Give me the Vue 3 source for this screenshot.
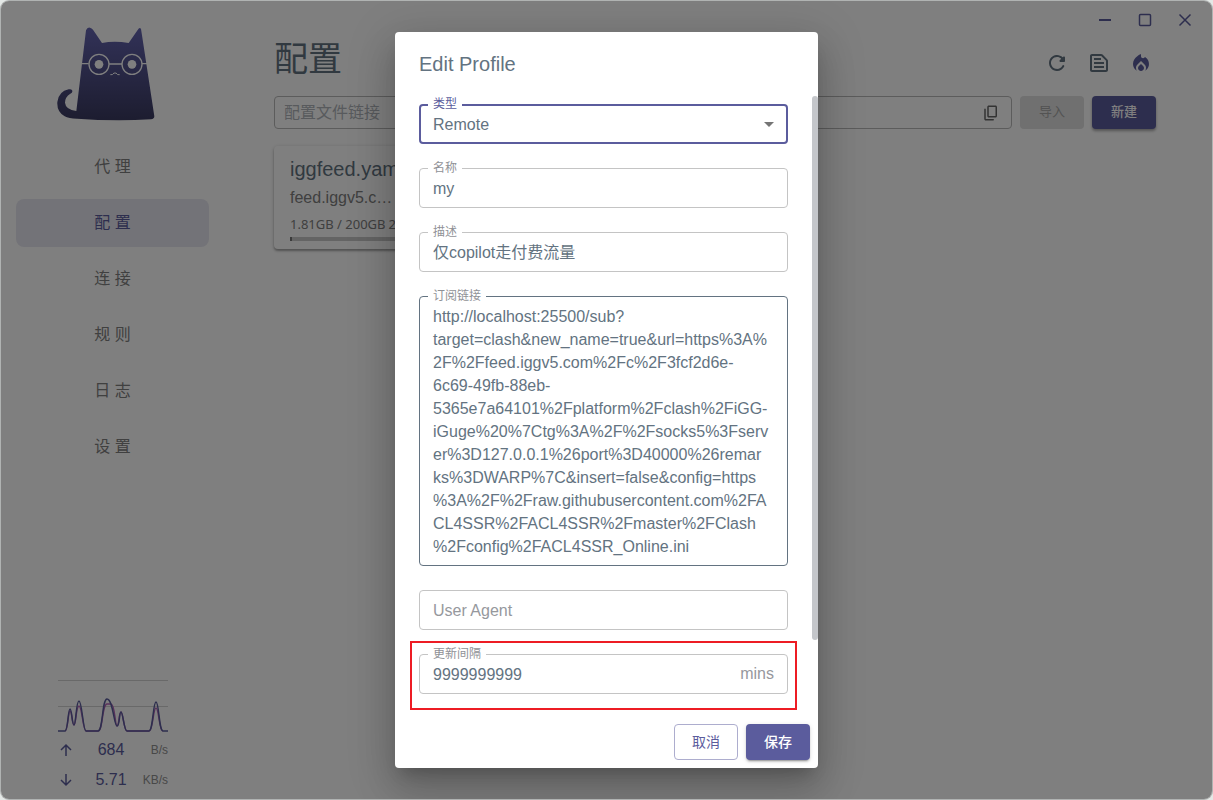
<script setup>
import { ref } from 'vue'

const navItems = ['代 理', '配 置', '连 接', '规 则', '日 志', '设 置']
const active = '配 置'

const type = ref('Remote')
const name = ref('my')
const desc = ref('仅copilot走付费流量')
const url = ref(
  'http://localhost:25500/sub?target=clash&new_name=true&url=https%3A%2F%2Ffeed.iggv5.com%2Fc%2F3fcf2d6e-6c69-49fb-88eb-5365e7a64101%2Fplatform%2Fclash%2FiGG-iGuge%20%7Ctg%3A%2F%2Fsocks5%3Fserver%3D127.0.0.1%26port%3D40000%26remarks%3DWARP%7C&insert=false&config=https%3A%2F%2Fraw.githubusercontent.com%2FACL4SSR%2FACL4SSR%2Fmaster%2FClash%2Fconfig%2FACL4SSR_Online.ini'
)
const agent = ref('')
const interval = ref('9999999999')
</script>

<template>
  <div class="frame">
    <div class="window">
      <aside class="sidebar">
        <svg class="logo" viewBox="50 50 294 282" aria-hidden="true">
          <defs>
            <linearGradient id="fur" x1="0" y1="0" x2="0" y2="1">
              <stop offset="0" stop-color="#6464b0" />
              <stop offset="1" stop-color="#3a3a60" />
            </linearGradient>
          </defs>
          <path
            fill="url(#fur)"
            d="M108 302 L137 60 Q141 50 149 52 Q154 53 158 58 L185 98 Q222 90 265 98 L292 59 Q298 49 302 56 L305 75 L342 318 Q342 326 332 327 Q220 333 110 325 Q85 325 73 318 Q49 304 51 275 Q55 243 85 237 Q95 235 96 241 Q97 247 90 250 Q74 260 74 277 Q76 298 108 302 Z"
          />
          <g fill="none" stroke="#fff" stroke-width="4">
            <circle cx="176" cy="162" r="30" />
            <circle cx="275" cy="162" r="30" />
            <path d="M123 160h22M206 161h39M305 160h17" />
            <path d="M210 193q8 1 9-3M238 193q-8 1-9-3M218 190q6-5 12 0" stroke-width="3" />
          </g>
          <circle cx="176" cy="162" r="13" fill="#fff" />
          <circle cx="275" cy="162" r="13" fill="#fff" />
        </svg>

        <nav class="nav">
          <a v-for="item in navItems" :key="item" href="#" :class="{ active: item === active }">{{ item }}</a>
        </nav>

        <div class="traffic">
          <svg class="graph" viewBox="0 0 110 60" aria-hidden="true">
            <path d="M0 8.5h110M0 34.5h110" stroke="#d2d2d2" fill="none" />
            <path
              d="M7 59C10 59 10 39 12 39S14 53 16 53S18 34 21 34S25 59 28 59H40C45 59 44 32 49 32H53C57 32 57 54 59 54S61 40 63 40S66 59 69 59H91C95 59 95 36 98 36S101 59 105 59"
              fill="none" stroke="#b866b8" stroke-width="1.5"
            />
            <path
              d="M0 59H7C10 59 10 37 12 37S14 53 16 53S18 29 21 29S25 59 28 59H40C45 59 44 27 49 27C55 27 56 54 59 54S61 40 63 40S66 59 69 59H91C95 59 95 30 98 30S101 59 105 59H110"
              fill="none" stroke="#5b5c9d" stroke-width="1.5"
            />
          </svg>
          <div class="rate">
            <svg viewBox="0 0 16 16" aria-hidden="true"><path d="M8 14V3M3 8l5-5 5 5" /></svg>
            <b>684</b><span>B/s</span>
          </div>
          <div class="rate">
            <svg viewBox="0 0 16 16" aria-hidden="true"><path d="M8 2v11M3 8l5 5 5-5" /></svg>
            <b>5.71</b><span>KB/s</span>
          </div>
        </div>
      </aside>

      <main class="main">
        <div class="controls">
          <button aria-label="最小化"><svg viewBox="0 0 14 14"><path d="M1 7h12" stroke-width="2" /></svg></button>
          <button aria-label="最大化"><svg viewBox="0 0 14 14"><rect x="1.5" y="1.5" width="11" height="11" rx="1" /></svg></button>
          <button aria-label="关闭"><svg viewBox="0 0 14 14"><path d="M1.5 1.5l11 11M12.5 1.5l-11 11" /></svg></button>
        </div>

        <header class="header">
          <h1>配置</h1>
          <div class="tools">
            <button aria-label="刷新">
              <svg viewBox="0 0 24 24"><path d="M17.65 6.35c-1.63-1.63-3.94-2.57-6.48-2.31-3.67.37-6.69 3.35-7.1 7.02C3.52 15.91 7.27 20 12 20c3.19 0 5.93-1.87 7.21-4.56.32-.67-.16-1.44-.9-1.44-.37 0-.72.2-.88.53-1.13 2.43-3.84 3.97-6.8 3.31-2.22-.49-4.01-2.3-4.48-4.52C5.31 9.44 8.26 6 12 6c1.66 0 3.14.69 4.22 1.78l-1.51 1.51c-.63.63-.19 1.71.7 1.71H19c.55 0 1-.45 1-1V6.41c0-.89-1.08-1.34-1.71-.71l-.64.65z" /></svg>
            </button>
            <button aria-label="文档">
              <svg viewBox="0 0 24 24"><path d="M14.17 5L19 9.83V19H5V5h9.17m0-2H5c-1.1 0-2 .9-2 2v14c0 1.1.9 2 2 2h14c1.1 0 2-.9 2-2V9.83c0-.53-.21-1.04-.59-1.41l-4.83-4.83c-.37-.38-.88-.59-1.41-.59zM7 15h10v2H7v-2zm0-4h10v2H7v-2zm0-4h7v2H7V7z" /></svg>
            </button>
            <button aria-label="激活" class="fire">
              <svg viewBox="0 0 24 24"><path d="M16 6l-.44.55C14.38 8.02 12 7.19 12 5.3V3S4 6 4 13c0 2.92 1.56 5.47 3.89 6.86-.56-.79-.89-1.76-.89-2.8 0-1.32.52-2.56 1.47-3.5L12 10.1l3.53 3.47c.95.93 1.47 2.17 1.47 3.5 0 1.02-.31 1.96-.85 2.75 1.89-1.15 3.29-3.06 3.71-5.3.66-3.55-1.07-6.9-3.86-8.52z" /><path d="M12 12.9l-2.13 2.09c-.56.56-.87 1.29-.87 2.07C9 18.68 10.35 20 12 20s3-1.32 3-2.94c0-.78-.31-1.52-.87-2.07L12 12.9z" /></svg>
            </button>
          </div>
        </header>

        <div class="import">
          <div class="link">
            <input type="text" placeholder="配置文件链接" aria-label="配置文件链接" />
            <button aria-label="粘贴">
              <svg viewBox="0 0 24 24"><path d="M15 20H5V7c0-.55-.45-1-1-1s-1 .45-1 1v13c0 1.1.9 2 2 2h10c.55 0 1-.45 1-1s-.45-1-1-1zm5-4V4c0-1.1-.9-2-2-2H9c-1.1 0-2 .9-2 2v12c0 1.1.9 2 2 2h9c1.1 0 2-.9 2-2zm-2 0H9V4h9v12z" /></svg>
            </button>
          </div>
          <button class="small" disabled>导入</button>
          <button class="small primary">新建</button>
        </div>

        <section class="cards">
          <article class="card">
            <h2>iggfeed.yaml</h2>
            <p class="source">feed.iggv5.c…</p>
            <p class="usage"><span>1.81GB / 200GB</span><span>2</span></p>
            <div class="bar"><i></i></div>
          </article>
        </section>
      </main>

      <div class="backdrop">
        <form class="dialog" role="dialog" aria-labelledby="dlg-title" @submit.prevent>
          <h2 id="dlg-title">Edit Profile</h2>
          <div class="body">
            <div class="field focused">
              <label for="f-type">类型</label>
              <select id="f-type" v-model="type"><option>Remote</option><option>Local</option></select>
              <svg class="caret" viewBox="0 0 10 5" aria-hidden="true"><path d="M0 0h10L5 5z" /></svg>
            </div>
            <div class="field">
              <label for="f-name">名称</label>
              <input id="f-name" v-model="name" type="text" />
            </div>
            <div class="field">
              <label for="f-desc">描述</label>
              <input id="f-desc" v-model="desc" type="text" />
            </div>
            <div class="field dark">
              <label for="f-url">订阅链接</label>
              <textarea id="f-url" v-model="url" rows="11" spellcheck="false"></textarea>
            </div>
            <div class="field">
              <input id="f-agent" v-model="agent" type="text" placeholder="User Agent" aria-label="User Agent" />
            </div>
            <div class="field">
              <label for="f-int">更新间隔</label>
              <input id="f-int" v-model="interval" type="text" inputmode="numeric" />
              <span class="suffix">mins</span>
              <div class="highlight"></div>
            </div>
            <div class="thumb"></div>
          </div>
          <footer class="actions">
            <button type="button" class="cancel">取消</button>
            <button type="submit" class="save">保存</button>
          </footer>
        </form>
      </div>
    </div>
  </div>
</template>

<style>
body {
  background: #e4e8e6;
}
</style>

<style scoped>
* {
  box-sizing: border-box;
}
.frame {
  height: 100vh;
  min-height: 600px;
  padding: 1px;
  border-radius: 9px;
  background: #b0b3b2;
  font-family: "Liberation Sans", "Noto Sans CJK SC", sans-serif;
  font-size: 16px;
  color: #637381;
}
.window {
  position: relative;
  display: flex;
  height: 100%;
  overflow: hidden;
  border-radius: 8px;
  background: #fff;
}
h1, h2, p {
  margin: 0;
  font-weight: 400;
}
button {
  display: flex;
  align-items: center;
  justify-content: center;
  padding: 0;
  border: 0;
  background: none;
  color: inherit;
  font: inherit;
}
input, select, textarea {
  min-width: 0;
  border: 0;
  outline: 0;
  background: none;
  color: inherit;
  font: inherit;
}

.sidebar {
  display: flex;
  flex: 0 0 224px;
  flex-direction: column;
  padding: 26px 16px 4px 15px;
}
.logo {
  width: 98px;
  height: 94px;
  margin-left: 41px;
}
.nav {
  display: flex;
  flex-direction: column;
  gap: 8px;
  margin-top: 22px;
}
.nav a {
  height: 48px;
  border-radius: 8px;
  color: #808080;
  line-height: 48px;
  text-align: center;
  text-decoration: none;
}
.nav a.active {
  background: rgba(91, 92, 157, 0.15);
  color: #5b5c9d;
}
.traffic {
  width: 110px;
  margin: auto 0 0 42px;
}
.graph {
  display: block;
  width: 110px;
  height: 60px;
  margin-bottom: 3px;
}
.rate {
  display: grid;
  grid-template-columns: 16px 1fr 28px;
  align-items: center;
  height: 30px;
  color: #5b5c9d;
}
.rate svg {
  width: 16px;
  height: 16px;
  fill: none;
  stroke: #5b5c9d;
  stroke-width: 1.5;
}
.rate b {
  padding-left: 8px;
  font-weight: 400;
  text-align: center;
}
.rate span {
  justify-self: end;
  color: #909090;
  font-size: 12px;
}

.main {
  flex: 1;
  min-width: 0;
  padding: 0 56px 0 49px;
}
.controls {
  display: flex;
  justify-content: flex-end;
  height: 38px;
  margin-right: -49px;
}
.controls button {
  width: 40px;
}
.controls svg {
  width: 14px;
  height: 14px;
  fill: none;
  stroke: #5b5c9d;
  stroke-width: 1.5;
}
.header {
  display: flex;
  align-items: center;
  justify-content: space-between;
  height: 48px;
}
h1 {
  margin-top: -8px;
  font-size: 34px;
  line-height: 48px;
}
.tools {
  display: flex;
  gap: 18px;
  margin-right: 3px;
}
.tools button {
  display: block;
}
.tools svg {
  display: block;
  width: 24px;
  height: 24px;
  fill: #637381;
}
.tools .fire svg {
  fill: #5b5c9d;
}
.import {
  display: flex;
  gap: 8px;
  margin-top: 9px;
}
.link {
  display: flex;
  flex: 1;
  align-items: center;
  height: 33px;
  padding: 0 11px 0 9px;
  border: 1px solid #b8b8b8;
  border-radius: 4px;
}
.link input {
  flex: 1;
  padding: 0;
}
.link input::placeholder {
  color: #b0b5ba;
  opacity: 1;
}
.link svg {
  width: 18px;
  height: 18px;
  fill: #666;
}
.small {
  width: 64px;
  height: 33px;
  padding-bottom: 4px;
  border-radius: 4px;
  background: #e0e0e0;
  color: #a6a6a6;
  font-size: 13px;
}
.small.primary {
  background: #5b5c9d;
  color: #fff;
  font-weight: 500;
  box-shadow: 0 2px 3px rgba(0, 0, 0, 0.35);
}
.cards {
  display: grid;
  grid-template-columns: repeat(3, 1fr);
  gap: 16px;
  margin-top: 17px;
}
.card {
  padding: 8px 16px;
  border-radius: 4px;
  box-shadow: 0 2px 2px rgba(0, 0, 0, 0.25), 0 1px 4px rgba(0, 0, 0, 0.2);
}
.card h2 {
  font-size: 20px;
  line-height: 30px;
}
.source {
  color: #808080;
  line-height: 28px;
}
.usage {
  display: flex;
  gap: 3px;
  color: #808080;
  font-family: "Noto Sans", sans-serif;
  font-size: 13px;
  line-height: 25px;
}
.bar {
  height: 4px;
  background: #c8c8c8;
}
.bar i {
  display: block;
  width: 2px;
  height: 4px;
  background: #777;
}

.backdrop {
  position: absolute;
  inset: 0;
  display: flex;
  align-items: center;
  justify-content: center;
  background: rgba(0, 0, 0, 0.5);
}
.dialog {
  display: flex;
  flex-direction: column;
  width: 423px;
  max-width: calc(100% - 64px);
  max-height: calc(100% - 62px);
  border-radius: 4px;
  background: #fff;
  box-shadow: 0 11px 15px -7px rgba(0, 0, 0, 0.2), 0 24px 38px 3px rgba(0, 0, 0, 0.14), 0 9px 46px 8px rgba(0, 0, 0, 0.12);
}
.dialog h2 {
  padding: 16px 24px;
  font-size: 20px;
  line-height: 32px;
}
.body {
  position: relative;
  display: flex;
  flex-direction: column;
  gap: 24px;
  padding: 8px 30px 22px 24px;
}
.thumb {
  position: absolute;
  top: 0;
  right: 0;
  width: 6px;
  height: 544px;
  border-radius: 3px;
  background: #c4c6ca;
}
.field {
  position: relative;
  display: flex;
  align-items: center;
  min-height: 40px;
  border: 1px solid #c4c4c4;
  border-radius: 4px;
}
.field.dark {
  border-color: #637381;
}
.field.focused {
  border: 2px solid #5b5c9d;
}
.field label {
  position: absolute;
  top: -11px;
  left: 8px;
  padding: 0 5px;
  background: #fff;
  color: #8f9196;
  font-size: 12px;
  line-height: 20px;
}
.field.focused label {
  top: -12px;
  left: 7px;
  color: #5b5c9d;
}
.field input {
  flex: 1;
  padding: 2px 13px 0;
  line-height: 24px;
}
.field input::placeholder {
  color: #96989d;
  opacity: 1;
}
.field select {
  flex: 1;
  height: 36px;
  padding: 0 12px;
  appearance: none;
}
.caret {
  position: absolute;
  right: 12px;
  width: 10px;
  height: 5px;
  fill: #757575;
  pointer-events: none;
}
.field textarea {
  display: block;
  flex: 1;
  padding: 8px 18px 7px 13px;
  line-height: 23px;
  overflow: hidden;
  resize: none;
}
.suffix {
  padding-right: 13px;
  color: #96989d;
}
.highlight {
  position: absolute;
  inset: -14px -10px -17px;
  border: 2px solid #ed1c24;
  pointer-events: none;
}
.actions {
  display: flex;
  gap: 8px;
  justify-content: flex-end;
  padding: 8px;
}
.actions button {
  width: 64px;
  height: 36px;
  padding-bottom: 2px;
  border-radius: 4px;
  font-size: 14px;
}
.actions .cancel {
  border: 1px solid #adadce;
  color: #5b5c9d;
}
.actions .save {
  background: #5b5c9d;
  color: #fff;
  font-weight: 500;
  box-shadow: 0 3px 1px -2px rgba(0, 0, 0, 0.2), 0 2px 2px rgba(0, 0, 0, 0.14), 0 1px 5px rgba(0, 0, 0, 0.12);
}
</style>
